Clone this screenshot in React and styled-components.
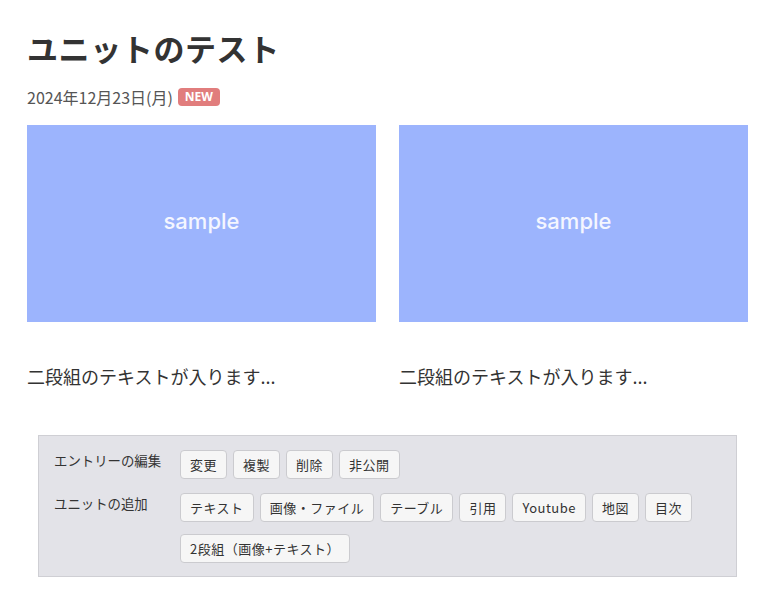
import React from 'react';
import styled, { createGlobalStyle } from 'styled-components';

const GlobalStyle = createGlobalStyle`
  body {
    margin: 0;
    background: #fff;
    font-family: "Noto Sans CJK JP", "Noto Sans", sans-serif;
    color: #333;
  }
`;

const Page = styled.div`
  padding: 26px 27px 20px;
`;

const Title = styled.h1`
  margin: 0;
  font-size: 31px;
  line-height: 43px;
  font-weight: 700;
  color: #333;
  letter-spacing: 0.6px;
`;

const DateRow = styled.div`
  margin-top: 16px;
  display: flex;
  align-items: center;
  gap: 5px;
  font-size: 16px;
  line-height: 24px;
  color: #555;
`;

const Badge = styled.span`
  display: inline-block;
  background: #e17d7d;
  color: #fff;
  font-family: "Noto Sans", sans-serif;
  font-weight: 700;
  font-size: 12px;
  line-height: 18px;
  padding: 0 7px;
  border-radius: 4px;
`;

const Columns = styled.div`
  margin-top: 16px;
  display: grid;
  grid-template-columns: 1fr 1fr;
  column-gap: 23px;
`;

const Thumb = styled.div`
  height: 197px;
  background: #9cb4fd;
  display: flex;
  align-items: center;
  justify-content: center;
  color: #f4f6ff;
  font-family: Inter, "Noto Sans", sans-serif;
  font-weight: 500;
  font-size: 22px;
  padding-bottom: 6px;
  box-sizing: border-box;
`;

const Caption = styled.p`
  margin: 41px 0 0;
  font-size: 18px;
  line-height: 27px;
  color: #333;
`;

const Panel = styled.div`
  margin: 45px 11px 0;
  background: #e3e3e8;
  border: 1px solid #cfcfd4;
  padding: 14px 14px 13px 15px;
  display: flex;
  flex-direction: column;
  gap: 14px;
`;

const Group = styled.div`
  display: flex;
  align-items: flex-start;
`;

const Label = styled.div`
  width: 126px;
  flex-shrink: 0;
  font-size: 13.4px;
  line-height: 18px;
  margin-top: 1px;
  color: #333;
`;

const Buttons = styled.div`
  display: flex;
  flex-wrap: wrap;
  column-gap: 6px;
  row-gap: 12px;
`;

const Button = styled.button`
  font-family: "Noto Sans CJK JP", "Noto Sans", sans-serif;
  font-size: 13px;
  letter-spacing: 0.5px;
  line-height: 27px;
  padding: 0 9px;
  background: #f6f6f6;
  border: 1px solid #cbcbcf;
  border-radius: 4px;
  color: #333;
  cursor: pointer;
`;

const edit = ['変更', '複製', '削除', '非公開'];
const units = ['テキスト', '画像・ファイル', 'テーブル', '引用', 'Youtube', '地図', '目次', '2段組（画像+テキスト）'];

export default function App() {
  return (
    <>
      <GlobalStyle />
      <Page>
        <Title>ユニットのテスト</Title>
        <DateRow>
          <span>2024年12月23日(月)</span>
          <Badge>NEW</Badge>
        </DateRow>
        <Columns>
          {[0, 1].map((i) => (
            <div key={i}>
              <Thumb>sample</Thumb>
              <Caption>二段組のテキストが入ります...</Caption>
            </div>
          ))}
        </Columns>
        <Panel>
          <Group>
            <Label>エントリーの編集</Label>
            <Buttons>
              {edit.map((b) => (
                <Button key={b}>{b}</Button>
              ))}
            </Buttons>
          </Group>
          <Group>
            <Label>ユニットの追加</Label>
            <Buttons>
              {units.map((b) => (
                <Button key={b}>{b}</Button>
              ))}
            </Buttons>
          </Group>
        </Panel>
      </Page>
    </>
  );
}
